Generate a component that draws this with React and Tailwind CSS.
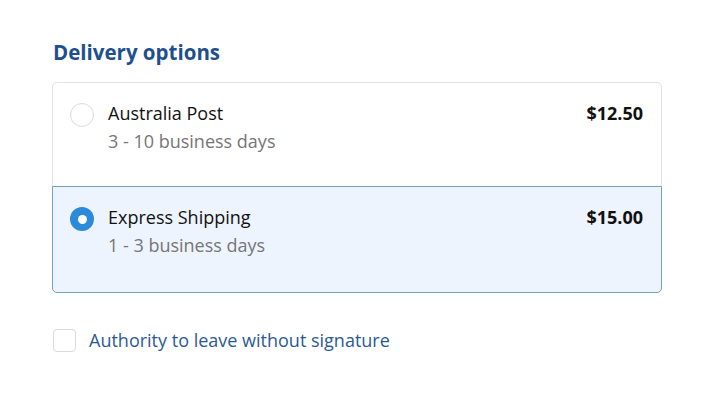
import React from "react";

const font = { fontFamily: '"Open Sans", "Noto Sans", sans-serif' };

function Option({ selected, title, sub, price }) {
  return (
    <div
      className={
        "flex items-start justify-between pl-[17px] pr-[18px] pt-[16px] " +
        (selected
          ? "bg-[#eef4fd] border border-[#6fa5b8] rounded-b-[5px] -mx-px -mb-px h-[107px]"
          : "h-[103px]")
      }
    >
      <div className="flex items-start">
        <div className="mt-[4px] w-[24px] h-[24px] shrink-0 flex items-center justify-center">
          {selected ? (
            <div className="w-[24px] h-[24px] rounded-full bg-[#2b8ad9] flex items-center justify-center">
              <div className="w-[9px] h-[9px] rounded-full bg-white" />
            </div>
          ) : (
            <div className="w-[24px] h-[24px] rounded-full border border-[#dcdcdc] bg-white" />
          )}
        </div>
        <div className="ml-[14px]">
          <div className="text-[18px] leading-[28px] text-[#111]">{title}</div>
          <div className="text-[18px] leading-[28px] text-[#767676]">{sub}</div>
        </div>
      </div>
      <div className="text-[18px] leading-[28px] font-bold text-[#111]">{price}</div>
    </div>
  );
}

export default function App() {
  return (
    <div className="w-[720px] h-[411px] bg-white" style={font}>
      <div className="ml-[52px] w-[610px] pt-[38px]">
        <h2 className="text-[20.5px] leading-[29px] font-bold text-[#1f4f8f] ml-px">
          Delivery options
        </h2>
        <div className="mt-[15px] border border-[#e3e3e3] rounded-[5px]">
          <Option title="Australia Post" sub="3 - 10 business days" price="$12.50" />
          <Option selected title="Express Shipping" sub="1 - 3 business days" price="$15.00" />
        </div>
        <label className="mt-[33px] flex items-center">
          <div className="ml-px w-[23px] h-[23px] rounded-[4px] border border-[#dadada] bg-white" />
          <span className="ml-[13px] text-[18px] leading-[28px] text-[#2a5a96]">
            Authority to leave without signature
          </span>
        </label>
      </div>
    </div>
  );
}
